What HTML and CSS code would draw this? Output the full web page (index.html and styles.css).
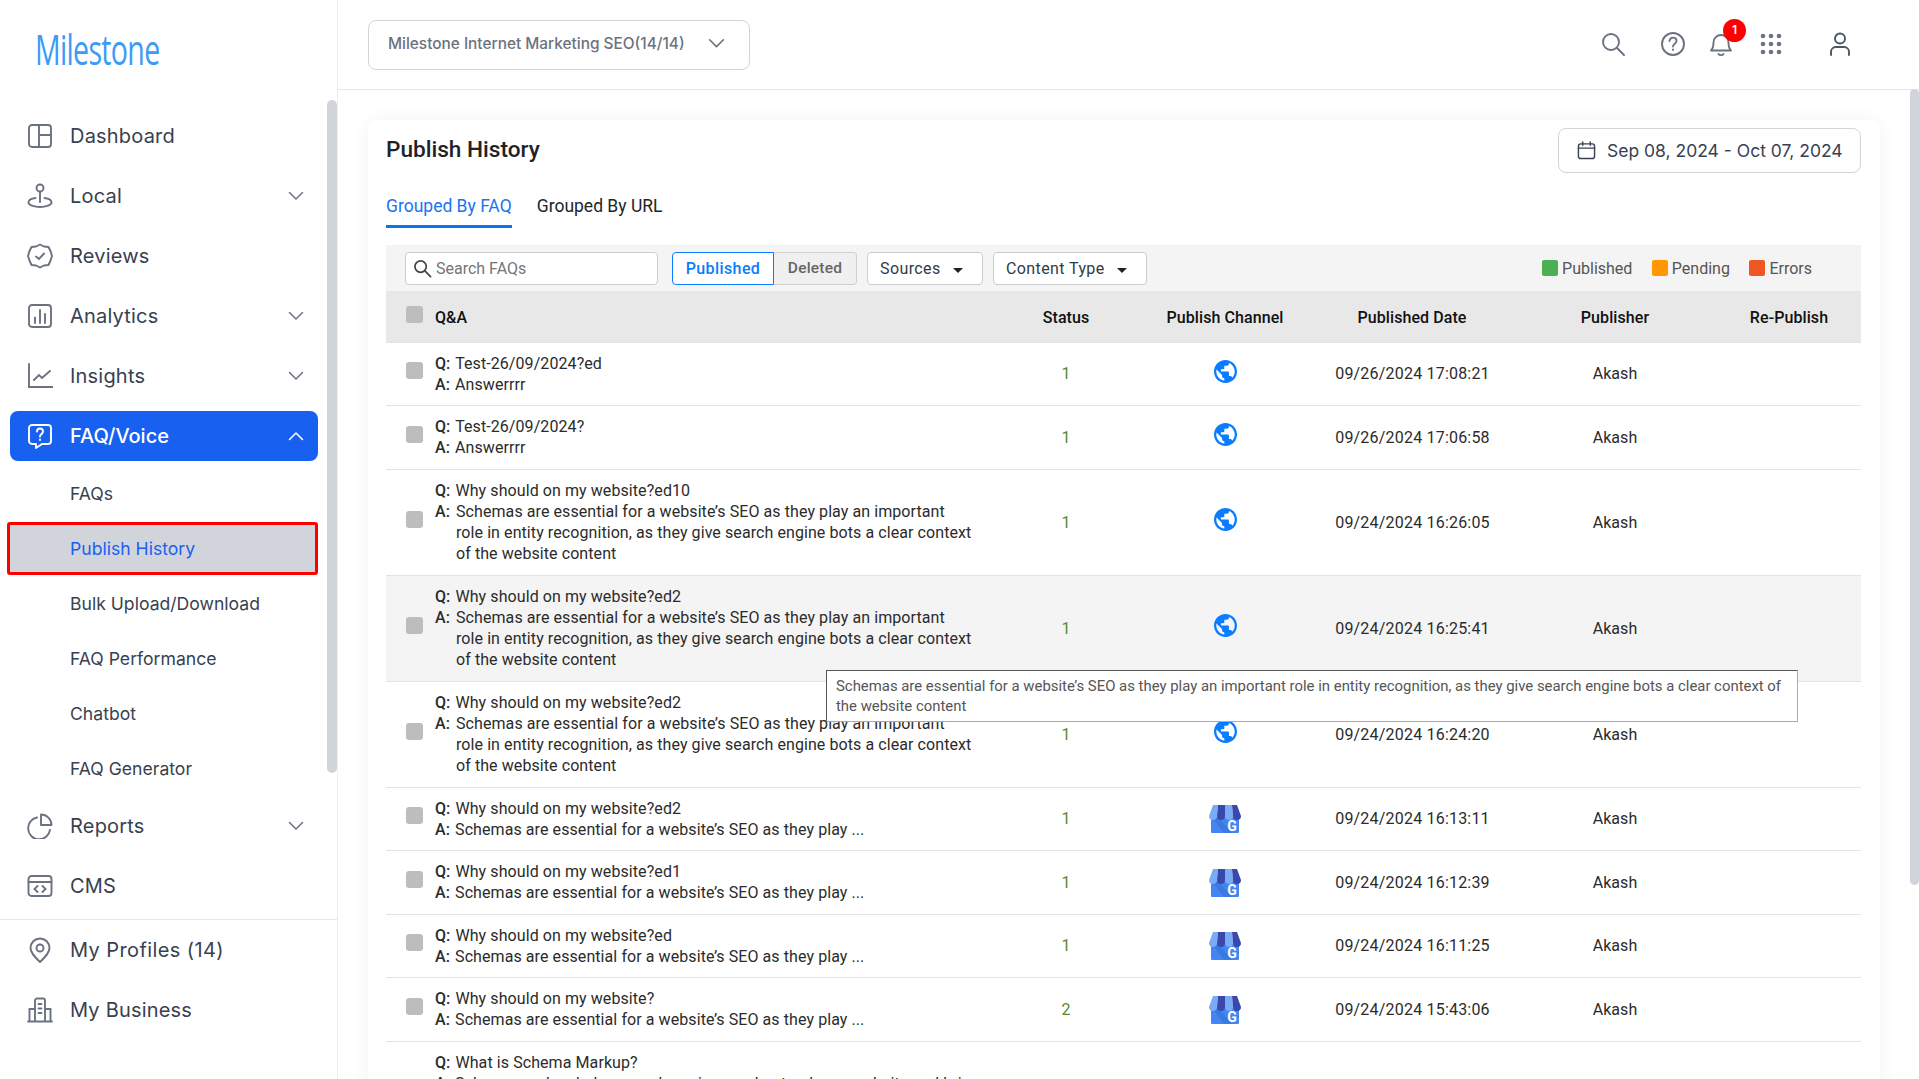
FILE: index.html
```html
<!DOCTYPE html>
<html lang="en">
<head>
    <meta charset="UTF-8">
    <meta name="viewport" content="width=device-width, initial-scale=1.0">
    <title>Publish History</title>
    <link rel="stylesheet" href="styles.css">
</head>
<body>
    <svg class="defs" width="0" height="0">
        <symbol id="chev-down" viewBox="0 0 16 16"><path d="M1.500 4.500 8 11l6.500-6.500" fill="none" stroke="currentColor" stroke-width="1.500" stroke-linecap="round" stroke-linejoin="round"/></symbol>
        <symbol id="globe" viewBox="2 2 20 20">
            <path fill="#0a7cff" d="M12 2C6.480 2 2 6.480 2 12s4.480 10 10 10 10-4.480 10-10S17.520 2 12 2zm-1 17.930c-3.950-.49-7-3.850-7-7.930 0-.62.08-1.210.21-1.790L9 15v1c0 1.100.9 2 2 2v1.930zm6.900-2.540c-.26-.81-1-1.390-1.900-1.390h-1v-3c0-.55-.45-1-1-1H8v-2h2c.55 0 1-.45 1-1V7h2c1.100 0 2-.9 2-2v-.41c2.930 1.190 5 4.060 5 7.410 0 2.080-.8 3.970-2.100 5.390z"/>
        </symbol>
        <symbol id="gmb" viewBox="0 0 32 28">
            <path d="M2 12h28v15a1 1 0 0 1-1 1H3a1 1 0 0 1-1-1z" fill="#4285f4"/>
            <path d="M3 12h6l14 16h-8z" fill="#3b78e0"/>
            <path d="M4 0h5L8 11a4 4 0 0 1-8 0z" fill="#7baaf7"/>
            <path d="M9 0h7v11a3.500 3.500 0 0 1-8 0z" fill="#3949ab"/>
            <path d="M16 0h7l1 11a4 4 0 0 1-8 0z" fill="#7baaf7"/>
            <path d="M23 0h5l4 11a4 4 0 0 1-8 0z" fill="#3949ab"/>
        </symbol>
    </svg>

    <aside class="sidebar">
        <div class="logo"><span class="logo-text">Milestone</span></div>
        <nav class="nav">
            <a class="nav-item">
                <svg class="nav-icon" viewBox="0 0 26 26"><rect x="2" y="2" width="22" height="22" rx="3"/><path d="M12 2v22M12 12h12"/></svg>
                <span>Dashboard</span>
            </a>
            <a class="nav-item">
                <svg class="nav-icon" viewBox="0 0 26 26"><circle cx="13" cy="5" r="3.500"/><path d="M13 8.500V19M8.500 15C4.500 15.500 1.500 17 1.500 19.500S7 24 13 24s11.500-2 11.500-4.500S21.500 15.500 17.500 15"/></svg>
                <span>Local</span>
                <svg class="chev"><use href="#chev-down"/></svg>
            </a>
            <a class="nav-item">
                <svg class="nav-icon" viewBox="0 0 26 26"><path d="M13 1.500 17 3.500 21.500 4 23.500 8 25 13 23.500 17.500 21.500 22 17 22.500 13 24.500 9 22.500 4.500 22 2.500 17.500 1 13 2.500 8 4.500 4 9 3.500z" stroke-linejoin="round"/><path d="M9 13.500 12 16l5-5.500"/></svg>
                <span>Reviews</span>
            </a>
            <a class="nav-item">
                <svg class="nav-icon" viewBox="0 0 26 26"><rect x="2" y="2" width="22" height="22" rx="3"/><path d="M8 14.500V20M13 7v13M18 11v9"/></svg>
                <span>Analytics</span>
                <svg class="chev"><use href="#chev-down"/></svg>
            </a>
            <a class="nav-item">
                <svg class="nav-icon" viewBox="0 0 26 26"><path d="M2 1v23h24M7 17l5-5 3 3 8-7"/></svg>
                <span>Insights</span>
                <svg class="chev"><use href="#chev-down"/></svg>
            </a>
            <a class="nav-item active">
                <svg class="nav-icon" viewBox="0 0 26 26"><path d="M5 2h16a3 3 0 0 1 3 3v13a3 3 0 0 1-3 3h-6l-6 4v-4H5a3 3 0 0 1-3-3V5a3 3 0 0 1 3-3z" stroke-linejoin="round"/><path d="M10 8.500c0-4 6-4 6 0 0 2.500-3 2.500-3 5M13 16.500v.500"/></svg>
                <span>FAQ/Voice</span>
                <svg class="chev up"><use href="#chev-down"/></svg>
            </a>
            <a class="sub-item">FAQs</a>
            <a class="sub-item active">Publish History</a>
            <a class="sub-item">Bulk Upload/Download</a>
            <a class="sub-item">FAQ Performance</a>
            <a class="sub-item">Chatbot</a>
            <a class="sub-item">FAQ Generator</a>
            <a class="nav-item">
                <svg class="nav-icon" viewBox="0 0 26 26"><path d="M10 4.500A11 11 0 1 0 23 17"/><path d="M14 1.500a10.500 10.500 0 0 1 10.500 10.500H14z" stroke-linejoin="round"/></svg>
                <span>Reports</span>
                <svg class="chev"><use href="#chev-down"/></svg>
            </a>
            <a class="nav-item">
                <svg class="nav-icon" viewBox="0 0 26 26"><rect x="1.500" y="3" width="23" height="20" rx="3"/><path d="M1.500 9h23M10.500 13l-3 3 3 3M15.500 13l3 3-3 3"/></svg>
                <span>CMS</span>
            </a>
        </nav>
        <div class="nav-bottom">
            <a class="nav-item">
                <svg class="nav-icon" viewBox="0 0 26 26"><path d="M13 25C8 20 3.500 16 3.500 11a9.500 9.500 0 0 1 19 0c0 5-4.500 9-9.500 14z" stroke-linejoin="round"/><circle cx="13" cy="11" r="3.500"/></svg>
                <span class="profiles">My Profiles (14)</span>
            </a>
            <a class="nav-item">
                <svg class="nav-icon" viewBox="0 0 26 26"><path d="M1 24.500h24M2.500 24.500V12H8M23.500 24.500V12H18M8 24.500V3.500a2 2 0 0 1 2-2h6a2 2 0 0 1 2 2v21M11.500 7h3M11.500 11.500h3M11.500 16h3"/></svg>
                <span>My Business</span>
            </a>
        </div>
        <div class="side-scroll"></div>
    </aside>

    <div class="content">
        <header class="topbar">
            <div class="account-select">
                <span>Milestone Internet Marketing SEO(14/14)</span>
                <svg class="chev"><use href="#chev-down"/></svg>
            </div>
            <div class="top-icons">
                <svg class="top-icon search" viewBox="0 0 26 26"><circle cx="11" cy="11" r="8"/><path d="m17 17 7 7"/></svg>
                <svg class="top-icon" viewBox="0 0 26 26"><circle cx="13" cy="13" r="11"/><path d="M9.500 10c.5-4.500 7-4.500 7 0 0 3-3.500 2.500-3.500 5.500M13 18.500v.500"/></svg>
                <div class="bell">
                    <svg class="top-icon" viewBox="0 0 26 26"><path d="M3 19.500c2-2 2.500-3.500 2.500-8a7.500 7.500 0 0 1 15 0c0 4.500.5 6 2.500 8z" stroke-linejoin="round"/><path d="M10.500 23c1 1.500 4 1.500 5 0"/></svg>
                    <span class="badge">1</span>
                </div>
                <svg class="top-icon dots" viewBox="0 0 26 26"><g class="dot-group"><circle cx="5" cy="5" r="2.300"/><circle cx="13" cy="5" r="2.300"/><circle cx="21" cy="5" r="2.300"/><circle cx="5" cy="13" r="2.300"/><circle cx="13" cy="13" r="2.300"/><circle cx="21" cy="13" r="2.300"/><circle cx="5" cy="21" r="2.300"/><circle cx="13" cy="21" r="2.300"/><circle cx="21" cy="21" r="2.300"/></g></svg>
                <svg class="top-icon user" viewBox="0 0 26 26"><circle cx="13" cy="7.500" r="5"/><path d="M4 24v-3a5 5 0 0 1 5-5h8a5 5 0 0 1 5 5v3"/></svg>
            </div>
        </header>

        <main class="main">
            <section class="card">
                <div class="card-head">
                    <h1>Publish History</h1>
                    <div class="date-range">
                        <svg class="calendar" viewBox="0 0 20 20"><rect x="1.500" y="3" width="17" height="15.500" rx="2.500"/><path d="M1.500 7.500h17M6 1v3.500M14 1v3.500"/></svg>
                        <span>Sep 08, 2024 - Oct 07, 2024</span>
                    </div>
                </div>

                <div class="tabs">
                    <a class="tab active">Grouped By FAQ</a>
                    <a class="tab">Grouped By URL</a>
                </div>

                <div class="toolbar">
                    <div class="search-box">
                        <svg class="search-icon" viewBox="0 0 20 20"><circle cx="8" cy="8" r="6"/><path d="m12.500 12.500 6 6"/></svg>
                        <span>Search FAQs</span>
                    </div>
                    <div class="segment">
                        <button class="seg-btn active">Published</button>
                        <button class="seg-btn">Deleted</button>
                    </div>
                    <button class="drop-btn sources">Sources <i class="caret"></i></button>
                    <button class="drop-btn ctype">Content Type <i class="caret"></i></button>
                    <div class="legend">
                        <span class="legend-item"><i class="sq green"></i>Published</span>
                        <span class="legend-item"><i class="sq orange"></i>Pending</span>
                        <span class="legend-item"><i class="sq red"></i>Errors</span>
                    </div>
                </div>

                <div class="table">
                    <div class="row head">
                        <div class="cell-check"><span class="check"></span></div>
                        <div>Q&amp;A</div>
                        <div class="center">Status</div>
                        <div class="center">Publish Channel</div>
                        <div class="center">Published Date</div>
                        <div class="center">Publisher</div>
                        <div class="center repub">Re-Publish</div>
                    </div>

                    <div class="row">
                        <div class="cell-check"><span class="check"></span></div>
                        <div class="qa"><div class="line"><b>Q:</b> Test-26/09/2024?ed</div><div class="line"><b>A:</b> Answerrrr</div></div>
                        <div class="center status">1</div>
                        <div class="center"><svg class="ch-globe"><use href="#globe"/></svg></div>
                        <div class="center date">09/26/2024 17:08:21</div>
                        <div class="center">Akash</div>
                        <div></div>
                    </div>
                    <div class="row">
                        <div class="cell-check"><span class="check"></span></div>
                        <div class="qa"><div class="line"><b>Q:</b> Test-26/09/2024?</div><div class="line"><b>A:</b> Answerrrr</div></div>
                        <div class="center status">1</div>
                        <div class="center"><svg class="ch-globe"><use href="#globe"/></svg></div>
                        <div class="center date">09/26/2024 17:06:58</div>
                        <div class="center">Akash</div>
                        <div></div>
                    </div>
                    <div class="row">
                        <div class="cell-check"><span class="check"></span></div>
                        <div class="qa"><div class="line"><b>Q:</b> Why should on my website?ed10</div><div class="line long"><b>A:</b><span>Schemas are essential for a website’s SEO as they play an important role in entity recognition, as they give search engine bots a clear context of the website content</span></div></div>
                        <div class="center status">1</div>
                        <div class="center"><svg class="ch-globe"><use href="#globe"/></svg></div>
                        <div class="center date">09/24/2024 16:26:05</div>
                        <div class="center">Akash</div>
                        <div></div>
                    </div>
                    <div class="row hover">
                        <div class="cell-check"><span class="check"></span></div>
                        <div class="qa"><div class="line"><b>Q:</b> Why should on my website?ed2</div><div class="line long"><b>A:</b><span>Schemas are essential for a website’s SEO as they play an important role in entity recognition, as they give search engine bots a clear context of the website content</span></div></div>
                        <div class="center status">1</div>
                        <div class="center"><svg class="ch-globe"><use href="#globe"/></svg></div>
                        <div class="center date">09/24/2024 16:25:41</div>
                        <div class="center">Akash</div>
                        <div></div>
                    </div>
                    <div class="row">
                        <div class="cell-check"><span class="check"></span></div>
                        <div class="qa"><div class="line"><b>Q:</b> Why should on my website?ed2</div><div class="line long"><b>A:</b><span>Schemas are essential for a website’s SEO as they play an important role in entity recognition, as they give search engine bots a clear context of the website content</span></div></div>
                        <div class="center status">1</div>
                        <div class="center"><svg class="ch-globe"><use href="#globe"/></svg></div>
                        <div class="center date">09/24/2024 16:24:20</div>
                        <div class="center">Akash</div>
                        <div></div>
                    </div>
                    <div class="row">
                        <div class="cell-check"><span class="check"></span></div>
                        <div class="qa"><div class="line"><b>Q:</b> Why should on my website?ed2</div><div class="line"><b>A:</b> Schemas are essential for a website’s SEO as they play ...</div></div>
                        <div class="center status">1</div>
                        <div class="center"><svg class="ch-gmb" viewBox="0 0 32 28"><use href="#gmb"/><text class="gmb-g" x="23" y="26">G</text></svg></div>
                        <div class="center date">09/24/2024 16:13:11</div>
                        <div class="center">Akash</div>
                        <div></div>
                    </div>
                    <div class="row">
                        <div class="cell-check"><span class="check"></span></div>
                        <div class="qa"><div class="line"><b>Q:</b> Why should on my website?ed1</div><div class="line"><b>A:</b> Schemas are essential for a website’s SEO as they play ...</div></div>
                        <div class="center status">1</div>
                        <div class="center"><svg class="ch-gmb" viewBox="0 0 32 28"><use href="#gmb"/><text class="gmb-g" x="23" y="26">G</text></svg></div>
                        <div class="center date">09/24/2024 16:12:39</div>
                        <div class="center">Akash</div>
                        <div></div>
                    </div>
                    <div class="row">
                        <div class="cell-check"><span class="check"></span></div>
                        <div class="qa"><div class="line"><b>Q:</b> Why should on my website?ed</div><div class="line"><b>A:</b> Schemas are essential for a website’s SEO as they play ...</div></div>
                        <div class="center status">1</div>
                        <div class="center"><svg class="ch-gmb" viewBox="0 0 32 28"><use href="#gmb"/><text class="gmb-g" x="23" y="26">G</text></svg></div>
                        <div class="center date">09/24/2024 16:11:25</div>
                        <div class="center">Akash</div>
                        <div></div>
                    </div>
                    <div class="row">
                        <div class="cell-check"><span class="check"></span></div>
                        <div class="qa"><div class="line"><b>Q:</b> Why should on my website?</div><div class="line"><b>A:</b> Schemas are essential for a website’s SEO as they play ...</div></div>
                        <div class="center status">2</div>
                        <div class="center"><svg class="ch-gmb" viewBox="0 0 32 28"><use href="#gmb"/><text class="gmb-g" x="23" y="26">G</text></svg></div>
                        <div class="center date">09/24/2024 15:43:06</div>
                        <div class="center">Akash</div>
                        <div></div>
                    </div>
                    <div class="row">
                        <div class="cell-check"></div>
                        <div class="qa"><div class="line"><b>Q:</b> What is Schema Markup?</div><div class="line"><b>A:</b> Schema markup helps search engines understand your website and bri ...</div></div>
                        <div></div>
                        <div></div>
                        <div></div>
                        <div></div>
                        <div></div>
                    </div>

                    <div class="tooltip">Schemas are essential for a website’s SEO as they play an important role in entity recognition, as they give search engine bots a clear context of the website content</div>
                </div>
            </section>
        </main>
        <div class="main-scroll"></div>
    </div>
</body>
</html>
```

FILE: styles.css
```css
* {
    box-sizing: border-box;
}
html, body {
    height: 100%;
}
body {
    margin: 0;
    display: flex;
    overflow: hidden;
    background: #fff;
    font-family: Inter, 'Liberation Sans', sans-serif;
    color: #374151;
}
.defs {
    position: absolute;
}

/* sidebar */
.sidebar {
    position: relative;
    width: 338px;
    flex-shrink: 0;
    height: 100%;
    border-right: 1px solid #eceef1;
    overflow: hidden;
}
.logo {
    height: 111px;
    padding: 24px 0 0 35px;
}
.logo-text {
    display: inline-block;
    font-family: 'Open Sans', sans-serif;
    font-size: 42px;
    font-weight: 500;
    line-height: 50px;
    letter-spacing: -1px;
    color: #3b9bf6;
    transform: scaleX(0.68);
    transform-origin: left center;
}
.nav-item {
    display: flex;
    align-items: center;
    height: 50px;
    margin: 0 19px 10px 10px;
    padding-left: 17px;
    padding-right: 14px;
    border-radius: 8px;
    font-size: 20px;
    letter-spacing: 0.2px;
    color: #374151;
}
.nav-item span {
    margin-left: 17px;
    flex: 1;
}
.nav-item .profiles {
    letter-spacing: 0.4px;
}
.nav-icon {
    width: 26px;
    height: 26px;
    fill: none;
    stroke: #6b7280;
    stroke-width: 1.9;
    stroke-linecap: round;
}
.chev {
    width: 16px;
    height: 16px;
    color: #6b7280;
}
.chev.up {
    transform: rotate(180deg);
}
.nav-item.active {
    background: #1860f0;
    color: #fff;
    font-weight: 500;
    letter-spacing: 0;
}
.nav-item.active .nav-icon {
    stroke: #fff;
}
.nav-item.active .chev {
    color: #fff;
}
.sub-item {
    display: flex;
    align-items: center;
    height: 45px;
    margin: 0 19px 10px 10px;
    padding-left: 60px;
    font-size: 17.600px;
    color: #374151;
}
.sub-item.active {
    height: 53px;
    margin: -4px 19px 6px 7px;
    padding-left: 60px;
    border: 3px solid #f00;
    border-radius: 3px;
    background: #d1d5db;
    color: #1860f0;
}
.nav-bottom {
    margin-top: -2px;
    padding-top: 5px;
    border-top: 1px solid #e5e7eb;
}
.side-scroll {
    position: absolute;
    right: 0;
    top: 100px;
    width: 10px;
    height: 673px;
    border-radius: 5px;
    background: #d1d5db;
}

/* top bar */
.content {
    position: relative;
    flex: 1;
    min-width: 0;
    height: 100%;
    overflow: hidden;
}
.topbar {
    display: flex;
    align-items: center;
    justify-content: space-between;
    height: 90px;
    padding: 0 66px 0 30px;
    border-bottom: 1px solid #e5e7eb;
}
.account-select {
    display: flex;
    align-items: center;
    justify-content: space-between;
    width: 382px;
    height: 50px;
    padding: 0 24px 3px 19px;
    border: 1px solid #d1d5db;
    border-radius: 8px;
    font-size: 15.400px;
    font-weight: 500;
    color: #6b7280;
}
.account-select .chev {
    width: 17px;
    height: 17px;
}
.top-icons {
    display: flex;
    align-items: center;
    gap: 22px;
    margin-top: -1px;
}
.top-icon {
    display: block;
    width: 26px;
    height: 26px;
    fill: none;
    stroke: #6b7280;
    stroke-width: 1.900;
    stroke-linecap: round;
}
.top-icon.search {
    margin-right: 12px;
}
.top-icon.dots {
    margin: 0 21px 0 2px;
}
.top-icon.user {
    stroke: #4b5563;
}
.dot-group {
    fill: #6b7280;
    stroke: none;
}
.bell {
    position: relative;
}
.badge {
    position: absolute;
    left: 15px;
    top: -12px;
    width: 23px;
    height: 23px;
    border-radius: 50%;
    background: #f00;
    color: #fff;
    font-size: 12px;
    font-weight: 600;
    line-height: 22px;
    text-align: center;
}

/* main card */
.main {
    padding: 30px 39px 0 30px;
}
.card {
    padding: 8px 19px 0 18px;
    background: #fff;
    border-radius: 8px;
    box-shadow: 0 0 20px rgba(0, 0, 0, 0.05);
    font-family: Roboto, 'Liberation Sans', sans-serif;
}
.card-head {
    display: flex;
    align-items: flex-start;
    justify-content: space-between;
}
h1 {
    margin: 7px 0 0;
    font-size: 22.600px;
    line-height: 30px;
    font-weight: 500;
    color: #1f2328;
}
.date-range {
    display: flex;
    align-items: center;
    gap: 11px;
    width: 303px;
    height: 45px;
    padding-left: 18px;
    border: 1px solid #d1d5db;
    border-radius: 8px;
    font-family: Inter, sans-serif;
    font-size: 17.500px;
    color: #374151;
}
.calendar {
    width: 19px;
    height: 19px;
    fill: none;
    stroke: #374151;
    stroke-width: 1.500;
    stroke-linecap: round;
}
.tabs {
    display: flex;
    gap: 25px;
    margin: 21px 0 17px;
}
.tab {
    height: 34px;
    font-size: 17.500px;
    line-height: 24px;
    color: #212529;
}
.tab.active {
    color: #1a73f0;
    border-bottom: 3px solid #0a73ee;
}

/* toolbar */
.toolbar {
    display: flex;
    align-items: center;
    height: 47px;
    padding: 0 49px 0 19px;
    background: #f4f4f4;
    border-bottom: 1px solid #e5e7eb;
    font-size: 16px;
}
.search-box {
    display: flex;
    align-items: center;
    gap: 4px;
    width: 253px;
    height: 33px;
    padding-left: 7px;
    background: #fff;
    border: 1px solid #ccc;
    border-radius: 4px;
    color: #757575;
}
.search-icon {
    width: 19px;
    height: 19px;
    fill: none;
    stroke: #444;
    stroke-width: 1.800;
    stroke-linecap: round;
}
.segment {
    display: flex;
    margin-left: 14px;
}
.seg-btn {
    height: 33px;
    width: 83px;
    padding: 0;
    background: #f0f0f0;
    border: 1px solid #d0d0d0;
    border-left: 0;
    border-radius: 0 4px 4px 0;
    font: 500 15.500px Roboto, sans-serif;
    letter-spacing: 0.2px;
    color: #666;
}
.seg-btn.active {
    width: 102px;
    background: #fff;
    border: 1px solid #0a7cff;
    border-radius: 4px 0 0 4px;
    font-size: 16px;
    letter-spacing: 0.4px;
    color: #0a7cff;
}
.drop-btn {
    height: 33px;
    margin-left: 10px;
    padding: 0 0 0 12px;
    text-align: left;
    background: #fff;
    border: 1px solid #ccc;
    border-radius: 4px;
    font: 400 16px Roboto, sans-serif;
    letter-spacing: 0.4px;
    color: #2f3a4c;
}
.drop-btn.sources {
    width: 116px;
}
.drop-btn.ctype {
    width: 154px;
}
.caret {
    display: inline-block;
    margin-left: 8px;
    vertical-align: 1px;
    border-top: 5px solid #222;
    border-left: 5px solid transparent;
    border-right: 5px solid transparent;
}
.legend {
    display: flex;
    gap: 19.500px;
    margin-left: auto;
    color: #555;
}
.legend-item {
    display: flex;
    align-items: center;
    gap: 4px;
}
.sq {
    width: 16px;
    height: 16px;
    border-radius: 2px;
}
.sq.green {
    background: #4caf50;
}
.sq.orange {
    background: #ff9800;
}
.sq.red {
    background: #ee5622;
}

/* table */
.table {
    position: relative;
    font-size: 16px;
    letter-spacing: 0.08px;
    color: #2b2b2b;
}
.row {
    display: grid;
    grid-template-columns: 49px 550px 162px 156px 218px 188px 152px;
    align-items: center;
    border-bottom: 1px solid #e2e2e8;
}
.row.head {
    height: 50.500px;
    padding-top: 1px;
    background: #e8e8e8;
    font-weight: 500;
    color: #111;
}
.row.hover {
    background: #f4f4f4;
}
.center {
    text-align: center;
}
.date {
    padding-left: 1px;
    letter-spacing: 0.2px;
}
.repub {
    padding-left: 8px;
}
.cell-check {
    padding-left: 20px;
    margin-bottom: 6px;
}
.check {
    display: block;
    width: 17px;
    height: 17px;
    border-radius: 3px;
    background: #bdbdbd;
}
.qa {
    padding: 10px 11px 10px 0;
}
.line {
    line-height: 21.250px;
}
.line b {
    margin-right: 1px;
    font-weight: 500;
}
.line.long {
    display: flex;
    gap: 5px;
}
.status {
    color: #558b2f;
}
.ch-globe {
    display: block;
    width: 23px;
    height: 23px;
    margin: -5px auto 0;
}
.ch-gmb {
    display: block;
    width: 32px;
    height: 28px;
    margin: 1px auto 0;
}
.gmb-g {
    font-family: Roboto, sans-serif;
    font-size: 14px;
    font-weight: 700;
    text-anchor: middle;
    fill: #fff;
}
.tooltip {
    position: absolute;
    left: 440px;
    top: 378px;
    width: 972px;
    height: 52px;
    padding: 5px 9px;
    background: #fff;
    border: 1px solid #555;
    border-right-color: #aaa;
    border-bottom-color: #aaa;
    font-size: 14.900px;
    letter-spacing: 0;
    line-height: 20px;
    color: #555;
}
.main-scroll {
    position: absolute;
    right: 0;
    top: 89px;
    width: 9px;
    height: 796px;
    border-radius: 5px;
    background: #d1d5db;
}
```
